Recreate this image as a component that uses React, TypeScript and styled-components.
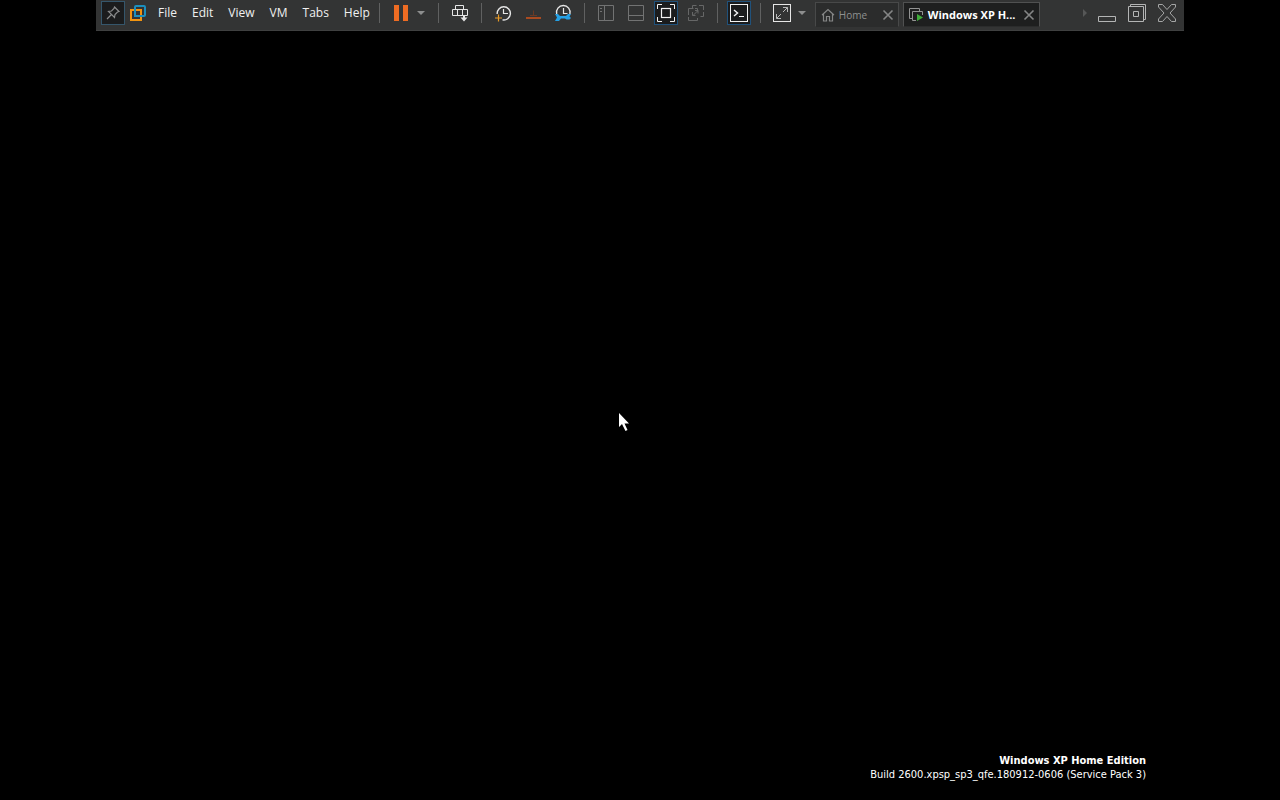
import React from "react";
import styled, { createGlobalStyle } from "styled-components";

const GlobalStyle = createGlobalStyle`
  * { box-sizing: border-box; }
  body { margin: 0; background: #000; }
  button { font: inherit; color: inherit; }
`;

const Screen = styled.div`
  position: relative;
  display: flex;
  flex-direction: column;
  min-height: 100vh;
  background: #000;
  color: #fff;
  overflow: hidden;
`;

const Toolbar = styled.header`
  display: flex;
  align-items: flex-start;
  width: 85%;
  height: 31px;
  margin: 0 auto;
  padding: 1px 5px 0;
  background: #333434;
  border-bottom: 1px solid #3f4040;
  font-family: "Open Sans", "Noto Sans", sans-serif;
  font-size: 12px;
  white-space: nowrap;
`;

const Menu = styled.nav`
  display: flex;
  gap: 15px;
  padding-left: 12px;
`;

const MenuButton = styled.button`
  height: 24px;
  padding: 0;
  border: 0;
  background: none;
  color: #f0f0f0;
  line-height: 24px;
`;

const Group = styled.div`
  display: flex;
  gap: 6px;
`;

const ToolButton = styled.button<{ $on?: boolean; $frame?: string }>`
  display: flex;
  align-items: center;
  justify-content: center;
  flex: none;
  width: 24px;
  height: 24px;
  padding: 0;
  border: 1px solid ${(p) => (p.$on ? p.$frame ?? "#20527c" : "transparent")};
  background: ${(p) => (p.$on ? "#1b1c1d" : "none")};
`;

const CaretButton = styled(ToolButton)`
  width: 16px;
`;

const ScrollButton = styled(ToolButton)`
  width: 8px;
`;

const Logo = styled.span`
  display: flex;
  align-items: center;
  height: 24px;
  margin-left: 5px;
`;

const Separator = styled.span`
  flex: none;
  width: 1px;
  height: 20px;
  margin: 2px 9px;
  background: #606161;
`;

const Tabs = styled.div`
  display: flex;
  gap: 4px;
  padding: 1px 0 0 5px;
`;

const Tab = styled.div<{ $active?: boolean }>`
  display: flex;
  align-items: center;
  width: ${(p) => (p.$active ? 137 : 84)}px;
  height: 25px;
  padding: 0 4px 0 5px;
  border: 1px solid ${(p) => (p.$active ? "#505151" : "#484949")};
  border-bottom-color: #2b2c2c;
  background: ${(p) => (p.$active ? "#1e1f1f" : "#2b2c2c")};
`;

const TabLabel = styled.button<{ $active?: boolean }>`
  display: flex;
  align-items: center;
  gap: 4px;
  flex: 1;
  min-width: 0;
  padding: 0;
  border: 0;
  background: none;
  color: ${(p) => (p.$active ? "#fff" : "#8f9090")};
  font-size: ${(p) => (p.$active ? 11 : 10)}px;
  font-weight: ${(p) => (p.$active ? 700 : 400)};
  line-height: 16px;
`;

const TabClose = styled.button`
  display: flex;
  padding: 0;
  border: 0;
  background: none;
`;

const WindowControls = styled.div`
  display: flex;
  gap: 6px;
  margin-left: auto;
`;

const Watermark = styled.footer`
  margin: auto 134px 18px auto;
  font-family: "DejaVu Sans Condensed", "DejaVu Sans", Tahoma, sans-serif;
  font-size: 11px;
  line-height: 14px;
  text-align: right;
`;

const Edition = styled.div`
  font-weight: 700;
`;

const Pointer = styled.svg`
  position: absolute;
  top: 412px;
  left: calc(50% - 22px);
`;

type IconProps = { children: React.ReactNode; color?: string; w?: number; h?: number };

const Icon = ({ children, color = "#e6e6e6", w = 20, h = 20 }: IconProps) => (
  <svg width={w} height={h} viewBox={`0 0 ${w} ${h}`} fill="none" stroke={color} strokeWidth="1" aria-hidden="true">
    {children}
  </svg>
);

const Caret = () => (
  <Icon w={8} h={4}>
    <path d="M0 0h8L4 4z" fill="#8d8e8e" stroke="none" />
  </Icon>
);

const Cross = () => (
  <Icon w={12} h={12} color="#858686">
    <path d="M1.5 1.5l9 9M10.5 1.5l-9 9" strokeWidth="1.6" />
  </Icon>
);

export default function App() {
  return (
    <Screen>
      <GlobalStyle />
      <Toolbar>
        <ToolButton $on $frame="#35566b" aria-label="Pin toolbar">
          <Icon color="#8b8c8d">
            <path d="M11.5 4l4.500 4.500-1.500.5-2.500 2.500-.500 3-6-6 3-.500L11 5.500zM8.500 11.500L4 16" strokeWidth="1.2" />
          </Icon>
        </ToolButton>
        <Logo>
          <Icon w={16} h={16}>
            <rect x="5" y="1" width="10" height="10" rx="1" stroke="#1b8fbd" strokeWidth="2" />
            <path d="M5 5H1v10h10v-4" stroke="#f2940f" strokeWidth="2" />
            <path d="M5 5h6v6" stroke="#f2940f" strokeWidth="2" />
            <path d="M5 4v7h7" stroke="#1b8fbd" strokeWidth="2" />
          </Icon>
        </Logo>
        <Menu aria-label="Main menu">
          {["File", "Edit", "View", "VM", "Tabs", "Help"].map((m) => (
            <MenuButton key={m}>{m}</MenuButton>
          ))}
        </Menu>
        <Separator />
        <ToolButton aria-label="Suspend">
          <Icon>
            <path d="M3 2h5v16H3zM12 2h5v16h-5z" fill="#ee6c23" stroke="none" />
          </Icon>
        </ToolButton>
        <CaretButton aria-label="Power options"><Caret /></CaretButton>
        <Separator />
        <ToolButton aria-label="Send Ctrl+Alt+Del">
          <Icon>
            <path d="M5.500 6.500v-4h8v4M2.500 6.500h15v6h-15zM7.500 6.500v6M12.500 6.500v6" />
            <path d="M14 12v3" strokeWidth="2" />
            <path d="M10.500 14.500h7L14 18.500z" fill="#e6e6e6" stroke="none" />
          </Icon>
        </ToolButton>
        <Separator />
        <Group>
          <ToolButton aria-label="Take snapshot">
            <Icon>
              <path d="M4.200 11a6.600 6.600 0 1 1 5.300 5.900" strokeWidth="1.400" />
              <path d="M10.500 6v4.500h4.500" strokeWidth="1.200" />
              <path d="M5.500 11.500v7M2 15h7" stroke="#e79a26" strokeWidth="1.200" />
            </Icon>
          </ToolButton>
          <ToolButton aria-label="Revert snapshot">
            <Icon>
              <path d="M10.500 7.500v5M7 12.500h7" stroke="#6b3924" />
              <path d="M3 15h15" stroke="#a94b21" strokeWidth="2" />
            </Icon>
          </ToolButton>
          <ToolButton aria-label="Manage snapshots">
            <Icon>
              <path d="M3.700 11a6.800 6.800 0 1 1 13.200 0" strokeWidth="1.400" />
              <path d="M10.500 5v5.500h4" strokeWidth="1.200" />
              <path d="M2 11h3l2 2h6l2-2h3l-1.500 2.500L18 15l-1.500 1.500h-3L12 15.500H8L6 18H2l2-3.500z" fill="#25a0e4" stroke="none" />
            </Icon>
          </ToolButton>
        </Group>
        <Separator />
        <Group>
          <ToolButton aria-label="Show library">
            <Icon color="#727373">
              <path d="M2.500 2.500h15v15h-15zM8.500 2.500v15M4 5.500h2M4 8.500h2" />
            </Icon>
          </ToolButton>
          <ToolButton aria-label="Show thumbnail bar">
            <Icon color="#727373">
              <path d="M2.500 2.500h15v15h-15zM2.500 12.500h15" />
            </Icon>
          </ToolButton>
          <ToolButton $on aria-label="Full screen">
            <Icon color="#f2f2f2">
              <path d="M1.500 6V1.500H6M14 1.500h4.500V6M18.500 14v4.500H14M6 18.500H1.500V14" />
              <rect x="5.500" y="5.500" width="9" height="9" strokeWidth="1.200" />
            </Icon>
          </ToolButton>
          <ToolButton aria-label="Unity">
            <Icon color="#666767">
              <path d="M6.500 5.500v-3h4M13 2.500h4.500V7M17.500 9v4.500h-3M2.500 5.500h5M9 5.500h2.500v3M2.500 5.500V12M2.500 14v3.500h9V15M7 12.500l5-5M9 7.500h3v3M6.500 9v3.500h3" />
            </Icon>
          </ToolButton>
        </Group>
        <Separator />
        <ToolButton $on aria-label="Console view">
          <Icon color="#f2f2f2">
            <rect x="1.500" y="1.500" width="17" height="17" />
            <path d="M5 7l3.500 3L5 13" strokeWidth="1.500" />
            <path d="M10 13.500h5" />
          </Icon>
        </ToolButton>
        <Separator />
        <ToolButton aria-label="Stretch guest">
          <Icon>
            <rect x="1.500" y="1.500" width="17" height="17" />
            <path d="M11 4.500h4.500V9M15.500 4.500l-4.500 4.500M4.500 11v4.500H9M4.500 15.500L9 11" stroke="#b8b9b9" />
          </Icon>
        </ToolButton>
        <CaretButton aria-label="Stretch options"><Caret /></CaretButton>
        <Tabs>
          <Tab>
            <TabLabel>
              <Icon w={14} h={14} color="#858686">
                <path d="M1 7l6-5.500L13 7M2.500 6v7h3V8.500h3V13h3V6" strokeWidth="1.200" />
              </Icon>
              Home
            </TabLabel>
            <TabClose aria-label="Close Home"><Cross /></TabClose>
          </Tab>
          <Tab $active>
            <TabLabel $active>
              <Icon w={15} h={14} color="#929393">
                <path d="M3 10.500H.500V.500h10V3" />
                <path d="M7 12.500H3.500v-9h10V7" />
                <path d="M8 6l6 3.500L8 13z" fill="#3fae3a" stroke="none" />
              </Icon>
              Windows XP H...
            </TabLabel>
            <TabClose aria-label="Close Windows XP Home"><Cross /></TabClose>
          </Tab>
        </Tabs>
        <WindowControls>
          <ScrollButton aria-label="Scroll tabs">
            <Icon w={4} h={8}><path d="M0 0l4 4-4 4z" fill="#565757" stroke="none" /></Icon>
          </ScrollButton>
          <ToolButton aria-label="Minimize">
            <Icon color="#b4b5b5"><path d="M1.500 13.500h17v5h-17z" /></Icon>
          </ToolButton>
          <ToolButton aria-label="Restore">
            <Icon color="#b4b5b5">
              <path d="M1.500 3.500h15v15h-15zM3.500 3.500v-2h15v15h-2M6.500 8.500h5v5h-5z" />
            </Icon>
          </ToolButton>
          <ToolButton aria-label="Close">
            <Icon color="#a5a6a6">
              <path d="M1.500 1.500h4L10 6.500l4.500-5h4v2.500L13 10l5.500 6v2.500h-4L10 13.500l-4.500 5h-4V16L7 10 1.500 4z" />
            </Icon>
          </ToolButton>
        </WindowControls>
      </Toolbar>
      <Pointer width="13" height="21" viewBox="0 0 13 21" aria-hidden="true">
        <path d="M1 1v14l3-3 3.500 7 2-1-3-6.500H11z" fill="#fff" />
      </Pointer>
      <Watermark>
        <Edition>Windows XP Home Edition</Edition>
        <div>Build 2600.xpsp_sp3_qfe.180912-0606 (Service Pack 3)</div>
      </Watermark>
    </Screen>
  );
}
